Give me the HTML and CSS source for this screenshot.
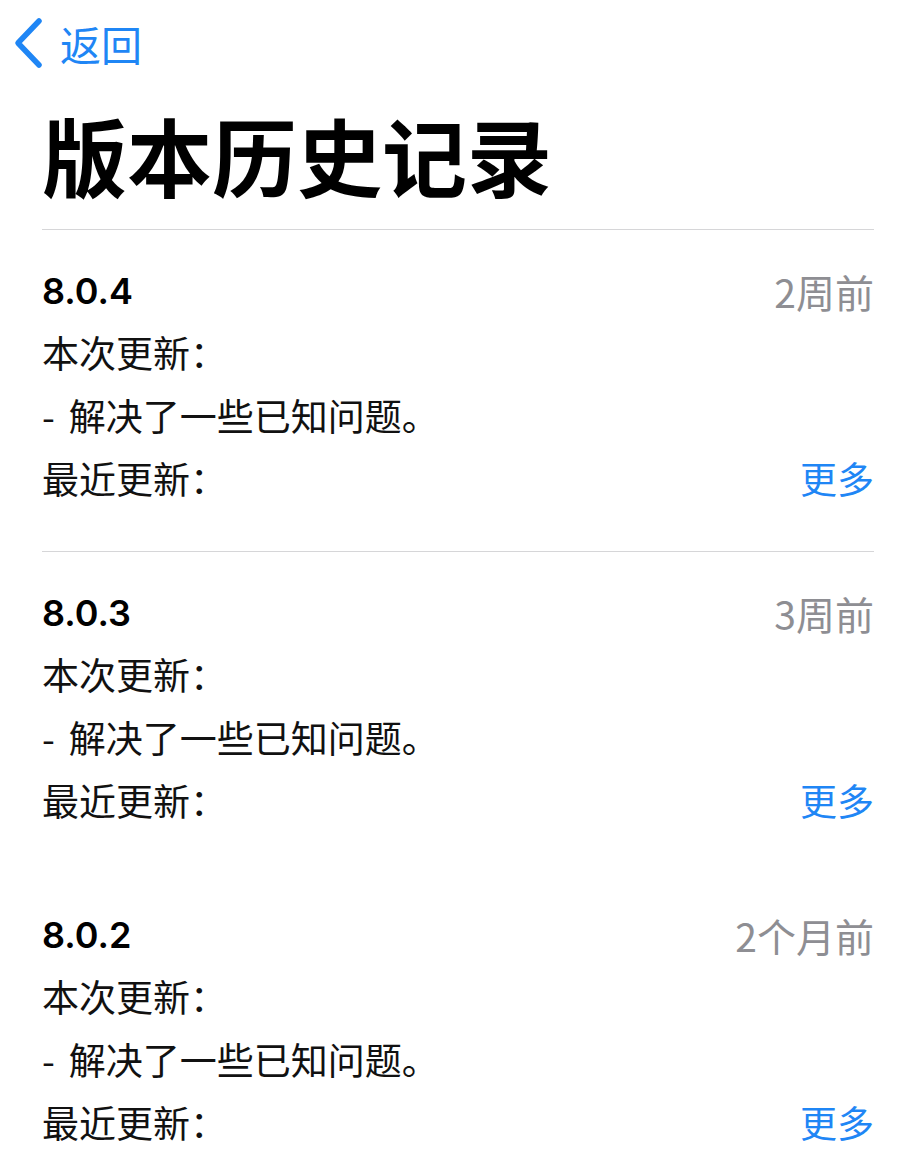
FILE: index.html
```html
<!DOCTYPE html>
<html lang="zh-CN">
<head>
    <meta charset="UTF-8">
    <meta name="viewport" content="width=device-width, initial-scale=1.0">
    <title>版本历史记录</title>
    <link rel="stylesheet" href="styles.css">
</head>
<body>
    <nav class="nav">
        <a class="back" href="#">
            <svg class="chevron" width="32" height="52" viewBox="0 0 32 52">
                <path d="M27 4 L6 26 L27 48" fill="none" stroke="#1f86f5" stroke-width="5.5" stroke-linecap="round" stroke-linejoin="round"/>
            </svg>
            <span>返回</span>
        </a>
    </nav>

    <h1 class="title">版本历史记录</h1>

    <div class="history">
        <div class="entry">
            <div class="row">
                <span class="version">8.0.4</span>
                <span class="date">2周前</span>
            </div>
            <div class="row">本次更新：</div>
            <div class="row"><span class="dash">-</span>解决了一些已知问题。</div>
            <div class="row">
                <span>最近更新：</span>
                <a class="more" href="#">更多</a>
            </div>
        </div>

        <div class="entry">
            <div class="row">
                <span class="version">8.0.3</span>
                <span class="date">3周前</span>
            </div>
            <div class="row">本次更新：</div>
            <div class="row"><span class="dash">-</span>解决了一些已知问题。</div>
            <div class="row">
                <span>最近更新：</span>
                <a class="more" href="#">更多</a>
            </div>
        </div>

        <div class="entry no-line">
            <div class="row">
                <span class="version">8.0.2</span>
                <span class="date">2个月前</span>
            </div>
            <div class="row">本次更新：</div>
            <div class="row"><span class="dash">-</span>解决了一些已知问题。</div>
            <div class="row">
                <span>最近更新：</span>
                <a class="more" href="#">更多</a>
            </div>
        </div>
    </div>
</body>
</html>
```

FILE: styles.css
```css
body {
    font-family: 'Inter', 'Noto Sans CJK SC', sans-serif;
    margin: 0;
    padding: 0 42px 0 42px;
    background: #fff;
    color: #111;
}

.nav {
    height: 86px;
    display: flex;
    align-items: center;
    margin-left: -30px;
}

.back {
    display: flex;
    align-items: center;
    gap: 16px;
    color: #1f86f5;
    text-decoration: none;
    font-family: 'Noto Sans CJK SC', sans-serif;
    font-size: 41px;
}

.chevron {
    display: block;
}

.title {
    margin: 18px 0 25px;
    font-family: 'Noto Sans CJK SC', sans-serif;
    font-size: 85px;
    font-weight: 700;
    line-height: 100px;
    color: #000;
}

.entry {
    border-top: 1px solid #d6d6d8;
    padding: 32px 0 41px;
    font-family: 'Noto Sans CJK SC', sans-serif;
    font-size: 37px;
}

.entry.no-line {
    border-top-color: transparent;
}

.row {
    display: flex;
    justify-content: space-between;
    align-items: center;
    line-height: 63px;
    height: 63px;
}

.row:first-child {
    height: 59px;
    line-height: 59px;
}

.dash {
    margin-right: 14px;
}

.row .dash {
    flex: none;
}

.row:has(.dash) {
    justify-content: flex-start;
}

.version {
    font-family: 'Inter', sans-serif;
    font-weight: 600;
    font-size: 36px;
    color: #000;
}

.date {
    color: #8e8e93;
    font-size: 39px;
}

.more {
    color: #1f86f5;
    text-decoration: none;
}
```
